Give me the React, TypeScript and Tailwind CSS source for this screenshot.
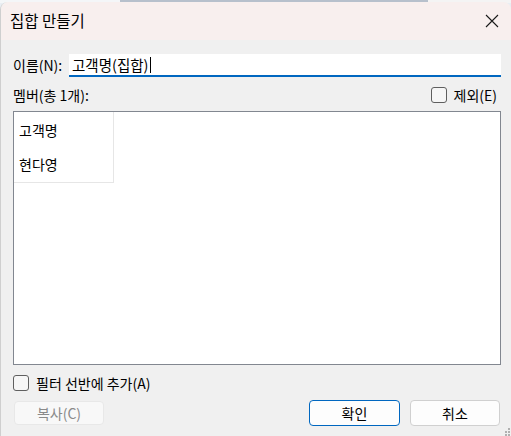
import React from "react";

const font = { fontFamily: '"Segoe UI", "Noto Sans CJK KR", "Noto Sans", sans-serif' };

function Check({ label }: { label: string }) {
  return (
    <label className="flex items-center gap-[7px] text-[14px] text-black leading-none">
      <span className="w-[16px] h-[16px] rounded-[3px] border border-[#5f5f5f] bg-[#f6f6f6] box-border" />
      <span>{label}</span>
    </label>
  );
}

export default function App() {
  return (
    <div className="w-[511px] h-[436px] overflow-hidden bg-[#e9eef3] relative" style={font}>
      {/* background strip behind window */}
      <div className="h-[3px] flex">
        <div className="w-[120px] bg-[#f4f6f8]" />
        <div className="w-[308px] bg-[#b7c0cc]" />
        <div className="flex-1 bg-[#f4f4f4]" />
      </div>
      <div className="absolute inset-0 top-[2px] rounded-tl-[8px] rounded-tr-[8px] overflow-hidden border-l border-[#cfcfcf] bg-[#f0f0f0] flex flex-col">
        {/* title bar */}
        <div className="h-[38px] bg-[#f8efee] flex items-center justify-between pl-[9px] pr-[11px] shrink-0">
          <span className="text-[15.5px] text-black">집합 만들기</span>
          <svg width="14" height="14" viewBox="0 0 14 14" className="mr-[1px]">
            <path d="M1 1 L13 13 M13 1 L1 13" stroke="#1a1a1a" strokeWidth="1.1" />
          </svg>
        </div>
        {/* body */}
        <div className="flex-1 flex flex-col pl-[12px] pr-[10px] pt-[14px] text-[14px] text-black">
          <div className="flex items-center h-[23px]">
            <span className="w-[56px]">이름(N):</span>
            <div className="flex-1 h-[23px] bg-white border-b-2 border-[#0067c0] flex items-center pl-[3px] text-[14.5px]">
              고객명(집합)<span className="inline-block w-[1px] h-[16px] bg-black ml-[1px]" />
            </div>
          </div>
          <div className="flex items-center justify-between h-[22px] mt-[7px] pr-[4px]">
            <span>멤버(총 1개):</span>
            <Check label="제외(E)" />
          </div>
          <div className="mt-[5px] h-[254px] border border-[#828790] bg-white">
            <div className="w-[100px] border-r border-b border-[#e6e6e6]">
              <div className="h-[35px] flex items-center pl-[5px] pt-[1px]">고객명</div>
              <div className="h-[35px] flex items-center pl-[5px]">현다영</div>
            </div>
          </div>
          <div className="mt-[9px] h-[18px] flex items-center">
            <Check label="필터 선반에 추가(A)" />
          </div>
          <div className="mt-[8px] flex items-center">
            <div className="ml-[1px] w-[90px] h-[24px] rounded-[4px] border border-[#e8e8e8] bg-[#f8f8f8] flex items-center justify-center text-[#8a8a8a]">
              복사(C)
            </div>
            <div className="flex-1" />
            <div className="w-[91px] h-[26px] rounded-[4px] border border-[#0067c0] bg-[#fdfdfd] flex items-center justify-center">
              확인
            </div>
            <div className="ml-[10px] mr-[1px] w-[90px] h-[26px] rounded-[4px] border border-[#d0d0d0] bg-[#fdfdfd] flex items-center justify-center">
              취소
            </div>
          </div>
        </div>
        <svg width="8" height="8" viewBox="0 0 8 8" className="absolute right-0 bottom-0">
          <rect x="5" y="0" width="2" height="2" fill="#b0b0b0" />
          <rect x="2" y="3" width="2" height="2" fill="#b0b0b0" />
          <rect x="5" y="3" width="2" height="2" fill="#b0b0b0" />
          <rect x="2" y="6" width="2" height="2" fill="#b0b0b0" />
          <rect x="5" y="6" width="2" height="2" fill="#b0b0b0" />
        </svg>
      </div>
    </div>
  );
}
